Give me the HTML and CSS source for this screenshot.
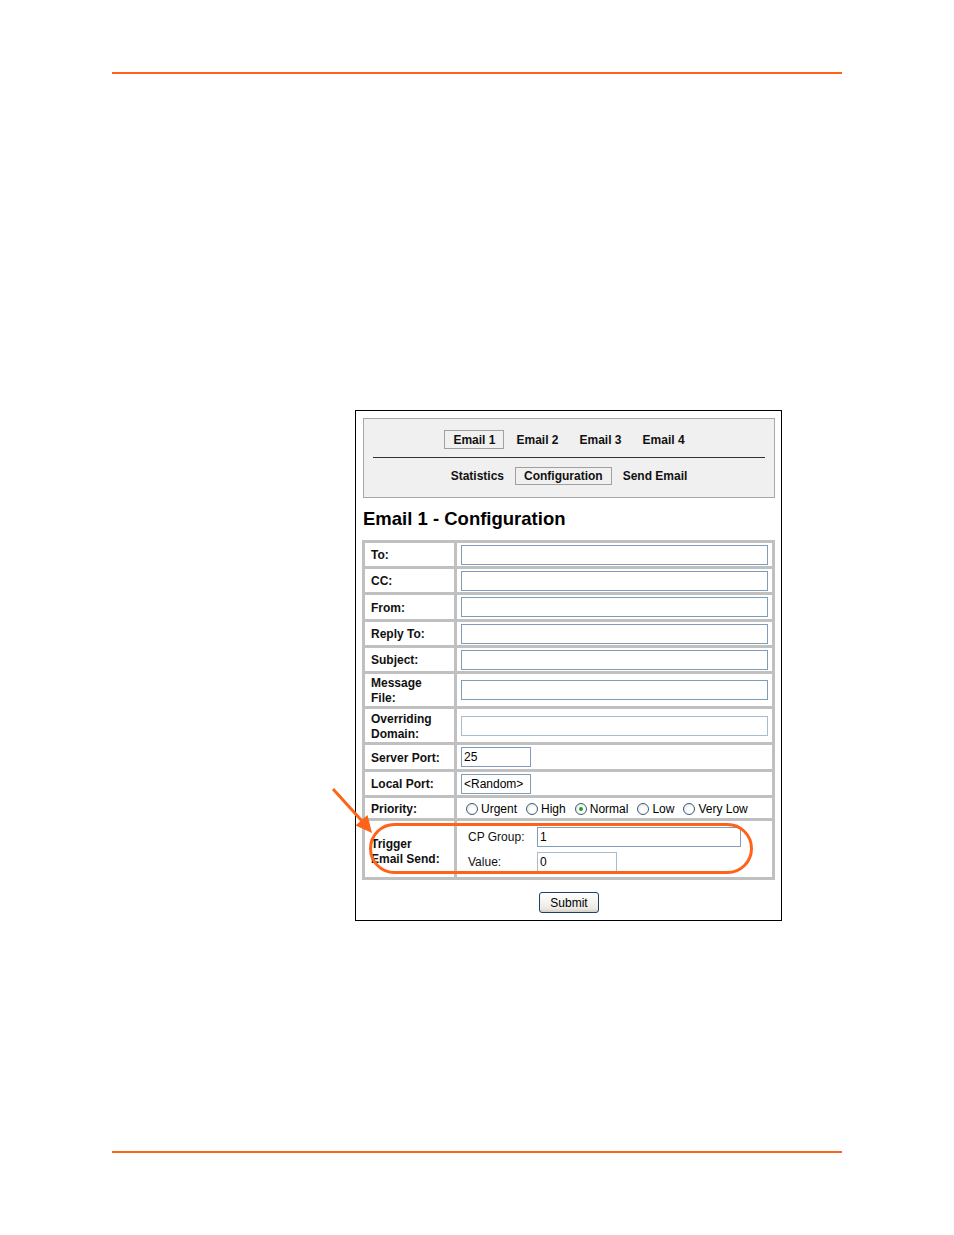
FILE: index.html
```html
<!DOCTYPE html>
<html>
<head>
<meta charset="utf-8">
<title>Email 1 - Configuration</title>
<link rel="stylesheet" href="styles.css">
</head>
<body>
<div class="rule rule-top"></div>
<div class="frame">
  <div class="nav">
    <div class="tabs">
      <span class="tab active">Email 1</span>
      <span class="tab">Email 2</span>
      <span class="tab">Email 3</span>
      <span class="tab">Email 4</span>
    </div>
    <div class="sep"></div>
    <div class="tabs tabs-sub">
      <span class="tab">Statistics</span>
      <span class="tab active">Configuration</span>
      <span class="tab">Send Email</span>
    </div>
  </div>
  <h1 class="title">Email 1 - Configuration</h1>
  <div class="form-wrap">
    <div class="grid">
      <div class="lbl r1">To:</div><div class="val r1"><span class="field wide"></span></div>
      <div class="lbl r1">CC:</div><div class="val r1"><span class="field wide"></span></div>
      <div class="lbl r2">From:</div><div class="val r2"><span class="field wide"></span></div>
      <div class="lbl r1">Reply To:</div><div class="val r1"><span class="field wide"></span></div>
      <div class="lbl r1">Subject:</div><div class="val r1"><span class="field wide"></span></div>
      <div class="lbl r3">Message<br>File:</div><div class="val r3"><span class="field wide"></span></div>
      <div class="lbl r4">Overriding<br>Domain:</div><div class="val r4"><span class="field wide light"></span></div>
      <div class="lbl r2">Server Port:</div><div class="val r2"><span class="field small">25</span></div>
      <div class="lbl r1">Local Port:</div><div class="val r1"><span class="field small">&lt;Random&gt;</span></div>
      <div class="lbl r5">Priority:</div>
      <div class="val r5 radios">
        <span class="opt"><span class="radio"></span>Urgent</span>
        <span class="opt"><span class="radio"></span>High</span>
        <span class="opt"><span class="radio on"></span>Normal</span>
        <span class="opt"><span class="radio"></span>Low</span>
        <span class="opt"><span class="radio"></span>Very Low</span>
      </div>
      <div class="lbl r6 lbl-trigger">Trigger<br>Email Send:</div>
      <div class="val r6 trigger">
        <div class="trow"><span class="tlbl">CP Group:</span><span class="field cp">1</span></div>
        <div class="trow"><span class="tlbl">Value:</span><span class="field vv">0</span></div>
      </div>
    </div>
    <div class="ellipse"></div>
    <svg class="arrow" width="46" height="52" viewBox="0 0 46 52">
      <line x1="3" y1="4" x2="32" y2="36" stroke="#ff6319" stroke-width="3"/>
      <polygon points="42,48 25.5,40.5 37.5,30" fill="#ff6319"/>
    </svg>
  </div>
  <div class="submit-row"><span class="btn">Submit</span></div>
</div>
<div class="rule rule-bottom"></div>
</body>
</html>
```
FILE: styles.css
```css
html, body {
  margin: 0;
  padding: 0;
  background: #ffffff;
}
body {
  width: 954px;
  height: 1235px;
  font-family: "Liberation Sans", Arial, sans-serif;
  color: #000;
  overflow: hidden;
}
.rule {
  height: 2px;
  width: 730px;
  margin-left: 112px;
  background: #ff6319;
}
.rule-top { margin-top: 72px; }
.rule-bottom { margin-top: 230px; }

.frame {
  box-sizing: border-box;
  margin: 336px 0 0 355px;
  width: 427px;
  height: 511px;
  border: 1px solid #000;
  padding: 7px 6px 0 7px;
}
.nav {
  box-sizing: border-box;
  width: 412px;
  height: 80px;
  background: #f0f0f0;
  border: 1px solid #a8a8a8;
  padding-top: 11px;
}
.tabs {
  display: flex;
  justify-content: center;
  gap: 3px;
  height: 19px;
}
.tabs-sub {
  gap: 2px;
  height: 18px;
}
.tab {
  box-sizing: border-box;
  height: 100%;
  padding: 0 8px;
  border: 1px solid transparent;
  font-size: 12px;
  font-weight: bold;
  line-height: 18px;
  color: #111;
}
.tabs-sub .tab { line-height: 17px; }
.tab.active { border-color: #a0a0a0; }
.sep {
  height: 1px;
  background: #333;
  margin: 8px 9px 9px 9px;
}
.title {
  margin: 10px 0 10px 0;
  font-size: 18.5px;
  line-height: 22px;
  font-weight: bold;
}
.form-wrap {
  position: relative;
  width: 413px;
  margin-left: -1px;
}
.grid {
  display: grid;
  grid-template-columns: 89px 315px;
  gap: 3px;
  padding: 3px;
  background: #c0c0c0;
}
.lbl, .val {
  background: #fff;
  display: flex;
  align-items: center;
}
.lbl {
  box-sizing: border-box;
  padding-left: 6px;
  padding-top: 2px;
  font-size: 12px;
  font-weight: bold;
  line-height: 15px;
  color: #111;
}
.lbl-trigger { padding-top: 6px; }
.val { padding-left: 4px; }
.r1 { height: 23px; }
.r2 { height: 24px; }
.r3 { height: 32px; }
.r4 { height: 33px; }
.r5 { height: 20px; }
.r6 { height: 56px; }

.field {
  box-sizing: border-box;
  display: block;
  height: 20px;
  border: 1px solid #7f9db9;
  background: #fff;
  font-size: 12px;
  line-height: 18px;
  padding-left: 2px;
  color: #000;
}
.field.wide { width: 307px; }
.field.light { border-color: #a5bdd3; }
.field.small { width: 70px; }
.radios {
  padding-left: 9px;
  gap: 9px;
  font-size: 12px;
  padding-top: 2px;
  box-sizing: border-box;
}
.opt {
  display: flex;
  align-items: center;
  gap: 3px;
  line-height: 14px;
}
.radio {
  box-sizing: border-box;
  width: 12px;
  height: 12px;
  border-radius: 50%;
  border: 1px solid #3a5e7e;
  background: radial-gradient(circle at 60% 60%, #ffffff 30%, #dcdcd6 100%);
  position: relative;
}
.radio.on::after {
  content: "";
  position: absolute;
  left: 3px;
  top: 3px;
  width: 4px;
  height: 4px;
  border-radius: 50%;
  background: #21a121;
}
.trigger {
  flex-direction: column;
  align-items: flex-start;
  justify-content: flex-start;
  padding-left: 11px;
  padding-top: 6px;
  gap: 5px;
  box-sizing: border-box;
}
.trow {
  display: flex;
  align-items: center;
  font-size: 12px;
  color: #111;
}
.tlbl { width: 69px; }
.field.cp { width: 204px; }
.field.vv { width: 80px; border-color: #a5bdd3; }

.ellipse {
  position: absolute;
  box-sizing: border-box;
  left: 7px;
  top: 283px;
  width: 384px;
  height: 51px;
  border: 3px solid #ff6319;
  border-radius: 26px;
}
.arrow {
  position: absolute;
  left: -32px;
  top: 245px;
}
.submit-row {
  display: flex;
  justify-content: center;
  margin-top: 12px;
}
.btn {
  box-sizing: border-box;
  width: 60px;
  height: 21px;
  border: 1px solid #1f3f66;
  border-radius: 3px;
  background: linear-gradient(#ffffff, #ecebe6 80%, #d6d0c5);
  font-size: 12px;
  line-height: 20px;
  text-align: center;
  color: #000;
}
```
